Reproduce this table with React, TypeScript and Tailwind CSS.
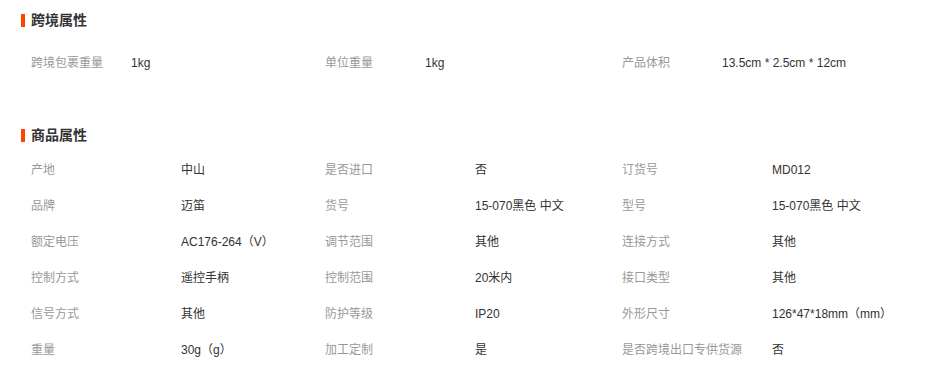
import React from 'react';

type Attr = { label: string; value: string };

const crossBorder: Attr[] = [
  { label: '跨境包裹重量', value: '1kg' },
  { label: '单位重量', value: '1kg' },
  { label: '产品体积', value: '13.5cm * 2.5cm * 12cm' },
];

const goods: Attr[] = [
  { label: '产地', value: '中山' },
  { label: '是否进口', value: '否' },
  { label: '订货号', value: 'MD012' },
  { label: '品牌', value: '迈笛' },
  { label: '货号', value: '15-070黑色 中文' },
  { label: '型号', value: '15-070黑色 中文' },
  { label: '额定电压', value: 'AC176-264（V）' },
  { label: '调节范围', value: '其他' },
  { label: '连接方式', value: '其他' },
  { label: '控制方式', value: '遥控手柄' },
  { label: '控制范围', value: '20米内' },
  { label: '接口类型', value: '其他' },
  { label: '信号方式', value: '其他' },
  { label: '防护等级', value: 'IP20' },
  { label: '外形尺寸', value: '126*47*18mm（mm）' },
  { label: '重量', value: '30g（g）' },
  { label: '加工定制', value: '是' },
  { label: '是否跨境出口专供货源', value: '否' },
];

const SectionTitle: React.FC<{ title: string }> = ({ title }) => (
  <div className="flex items-center h-5 pl-[21px]">
    <span className="w-1 h-[13px] bg-[#ff4400]" />
    <h3 className="ml-[6px] text-[14px] font-bold text-[#333]">{title}</h3>
  </div>
);

const AttrGrid: React.FC<{ items: Attr[]; labelWidth: string }> = ({ items, labelWidth }) => (
  <div className="grid grid-cols-[294px_297px_1fr] pl-[31px]">
    {items.map((item, index) => (
      <div key={index} className="flex items-center h-9 text-[12px]">
        <span className={`${labelWidth} shrink-0 text-[#999]`}>{item.label}</span>
        <span className="text-[#333]">{item.value}</span>
      </div>
    ))}
  </div>
);

export default function App() {
  return (
    <div
      className="w-[934px] h-[376px] bg-white pt-[10px]"
      style={{ fontFamily: '"Liberation Sans", "Noto Sans CJK SC", sans-serif' }}
    >
      <SectionTitle title="跨境属性" />
      <div className="mt-[15px]">
        <AttrGrid items={crossBorder} labelWidth="w-[100px]" />
      </div>
      <div className="mt-[44px]">
        <SectionTitle title="商品属性" />
      </div>
      <div className="mt-[7px]">
        <AttrGrid items={goods} labelWidth="w-[150px]" />
      </div>
    </div>
  );
}
